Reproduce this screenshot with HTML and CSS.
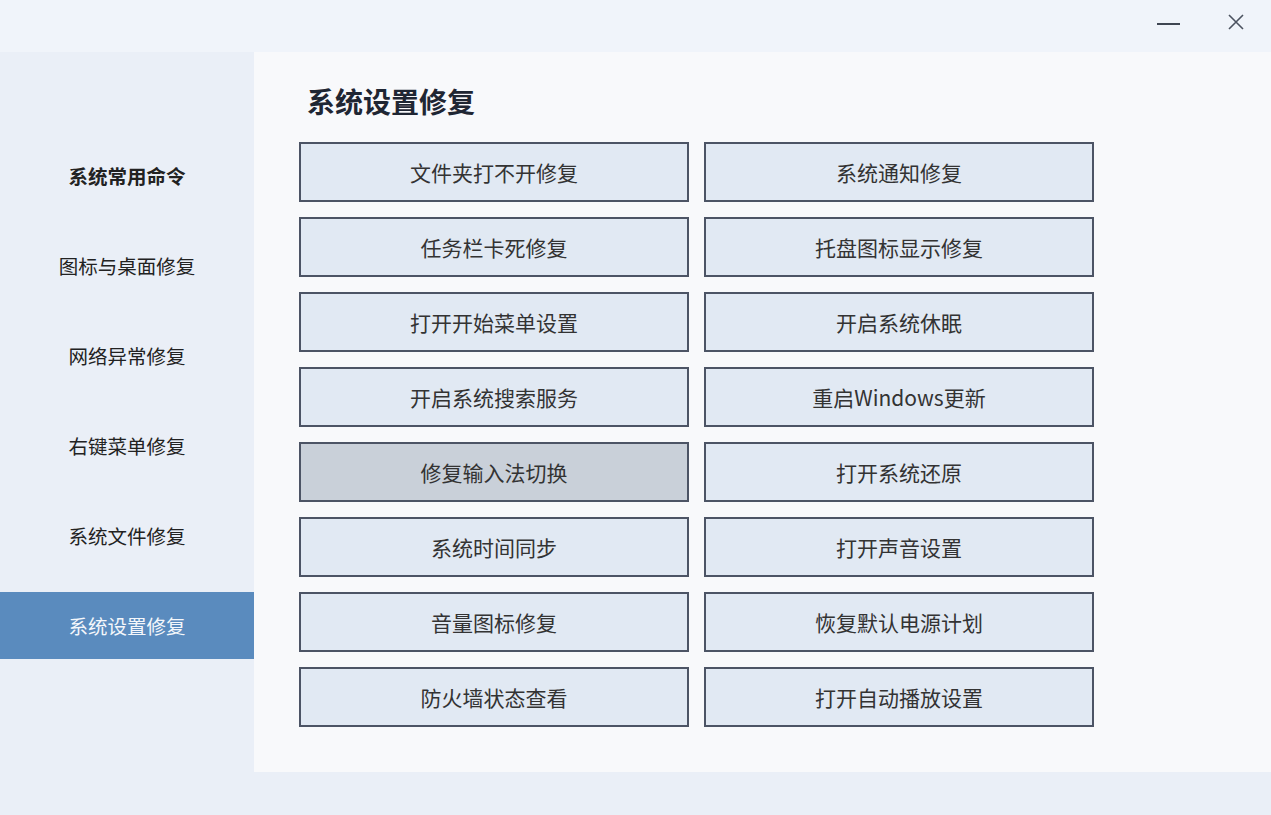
FILE: index.html
```html
<!DOCTYPE html>
<html lang="zh-CN">
<head>
    <meta charset="UTF-8">
    <meta name="viewport" content="width=device-width, initial-scale=1.0">
    <title>系统设置修复</title>
    <link rel="stylesheet" href="styles.css">
</head>
<body>
    <div class="titlebar">
        <button class="win-btn" title="最小化">
            <svg width="24" height="24" viewBox="0 0 24 24"><path d="M1 14H24" stroke="#3f4652" stroke-width="2"/></svg>
        </button>
        <button class="win-btn" title="关闭">
            <svg width="24" height="24" viewBox="0 0 24 24"><path d="M5 5L19 19M19 5L5 19" stroke="#4c5360" stroke-width="1.6"/></svg>
        </button>
    </div>

    <div class="main">
        <ul class="sidebar">
            <li class="nav-item first">系统常用命令</li>
            <li class="nav-item">图标与桌面修复</li>
            <li class="nav-item">网络异常修复</li>
            <li class="nav-item">右键菜单修复</li>
            <li class="nav-item">系统文件修复</li>
            <li class="nav-item active">系统设置修复</li>
        </ul>

        <div class="content">
            <h1>系统设置修复</h1>
            <div class="grid">
                <button class="fix-btn">文件夹打不开修复</button>
                <button class="fix-btn">系统通知修复</button>
                <button class="fix-btn">任务栏卡死修复</button>
                <button class="fix-btn">托盘图标显示修复</button>
                <button class="fix-btn">打开开始菜单设置</button>
                <button class="fix-btn">开启系统休眠</button>
                <button class="fix-btn">开启系统搜索服务</button>
                <button class="fix-btn">重启Windows更新</button>
                <button class="fix-btn hover">修复输入法切换</button>
                <button class="fix-btn">打开系统还原</button>
                <button class="fix-btn">系统时间同步</button>
                <button class="fix-btn">打开声音设置</button>
                <button class="fix-btn">音量图标修复</button>
                <button class="fix-btn">恢复默认电源计划</button>
                <button class="fix-btn">防火墙状态查看</button>
                <button class="fix-btn">打开自动播放设置</button>
            </div>
        </div>
    </div>
</body>
</html>
```

FILE: styles.css
```css
* {
    box-sizing: border-box;
    margin: 0;
    padding: 0;
}

body {
    font-family: "Noto Sans CJK SC", "Noto Sans", sans-serif;
    background: #eaeff7;
    color: #222;
    width: 1271px;
    height: 815px;
    overflow: hidden;
}

.titlebar {
    height: 52px;
    background: #f0f4fa;
    display: flex;
    justify-content: flex-end;
    align-items: flex-start;
    padding: 10px 23px 0 0;
    gap: 44px;
}

.win-btn {
    border: none;
    background: none;
    width: 24px;
    height: 24px;
    display: flex;
}

.main {
    display: flex;
    height: 763px;
}

.sidebar {
    list-style: none;
    width: 254px;
    flex-shrink: 0;
    padding-top: 90px;
    display: flex;
    flex-direction: column;
    gap: 23px;
}

.nav-item {
    height: 67px;
    display: flex;
    align-items: center;
    justify-content: center;
    font-size: 19.5px;
    color: #222;
}

.nav-item.first {
    font-weight: bold;
}

.nav-item.active {
    background: #5a8bbe;
    color: #f4f7fb;
}

.content {
    flex: 1;
    height: 720px;
    background: #f8f9fb;
    padding: 29px 0 0 45px;
}

.content h1 {
    font-size: 28px;
    font-weight: bold;
    line-height: 40px;
    color: #1f2633;
    margin: 0 0 21px 8px;
}

.grid {
    display: grid;
    grid-template-columns: 390px 390px;
    grid-auto-rows: 60px;
    gap: 15px;
}

.fix-btn {
    font-family: inherit;
    font-size: 21px;
    color: #333;
    background: #e1e9f3;
    border: 2px solid #4c5465;
    cursor: pointer;
}

.fix-btn:hover,
.fix-btn.hover {
    background: #c9d0d9;
}
```
